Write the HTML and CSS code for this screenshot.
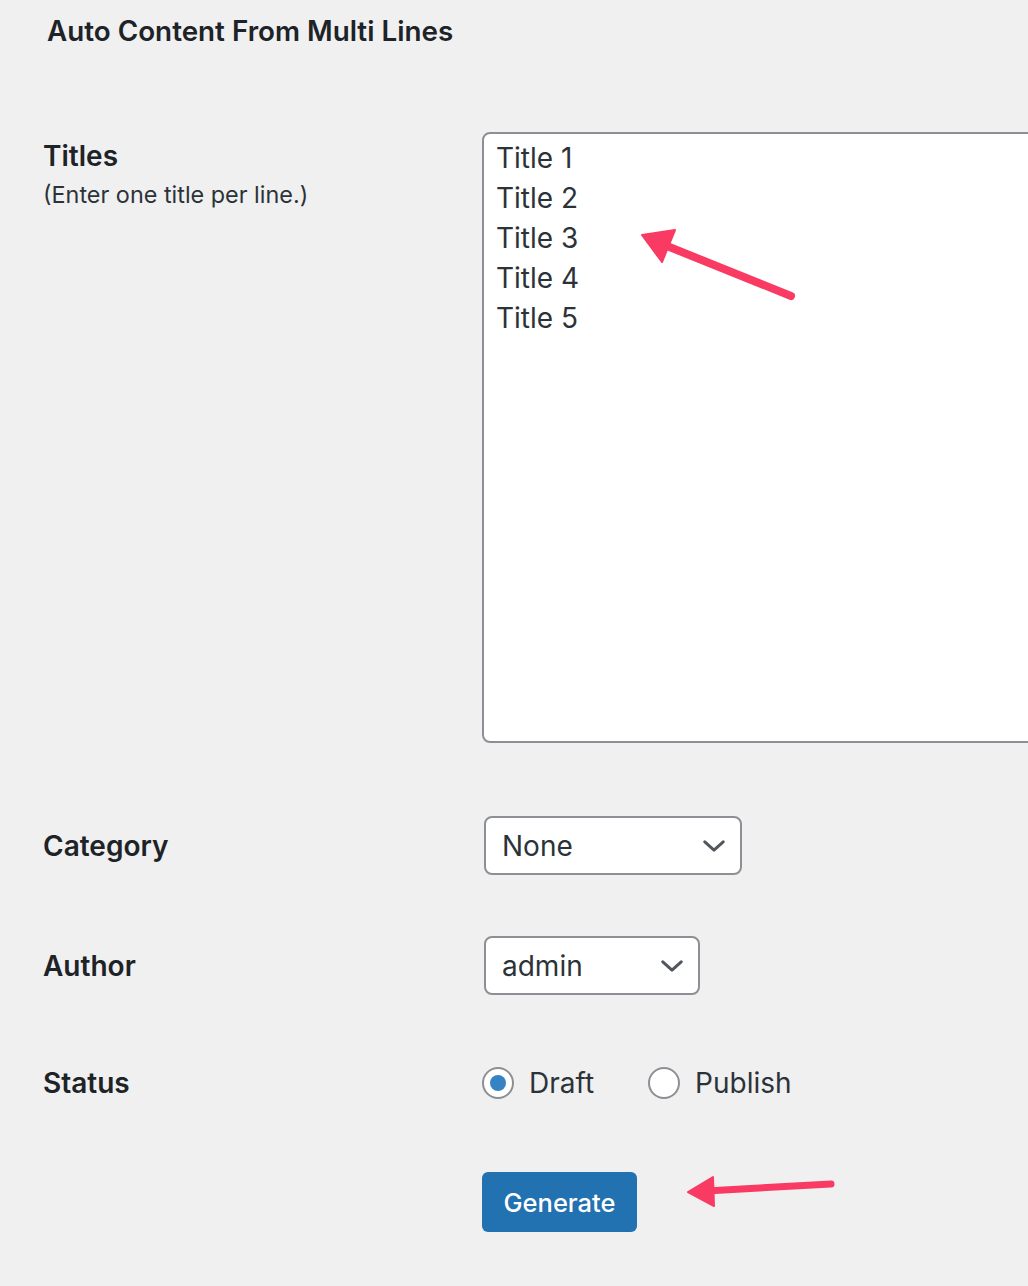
FILE: index.html
```html
<!DOCTYPE html>
<html lang="en">
<head>
<meta charset="utf-8">
<title>Auto Content From Multi Lines</title>
<link rel="stylesheet" href="styles.css">
</head>
<body>
<div class="page">
  <h2 class="title">Auto Content From Multi Lines</h2>
  <form class="form">
    <div class="row row-titles">
      <div class="label-col">
        <label class="label" for="titles">Titles</label>
        <p class="desc">(Enter one title per line.)</p>
      </div>
      <div class="clip">
        <textarea id="titles" class="textarea">Title 1
Title 2
Title 3
Title 4
Title 5</textarea>
      </div>
    </div>
    <div class="row row-category">
      <div class="label-col"><span class="label">Category</span></div>
      <div class="select select-category"><span>None</span>
        <svg class="chev" width="22" height="12" viewBox="0 0 22 12"><path d="M1.8 1.8 L11 10.2 L20.2 1.8" fill="none" stroke="#50575e" stroke-width="3" stroke-linecap="round" stroke-linejoin="round"/></svg>
      </div>
    </div>
    <div class="row row-author">
      <div class="label-col"><span class="label">Author</span></div>
      <div class="select select-author"><span>admin</span>
        <svg class="chev" width="22" height="12" viewBox="0 0 22 12"><path d="M1.8 1.8 L11 10.2 L20.2 1.8" fill="none" stroke="#50575e" stroke-width="3" stroke-linecap="round" stroke-linejoin="round"/></svg>
      </div>
    </div>
    <div class="row row-status">
      <div class="label-col"><span class="label">Status</span></div>
      <div class="radios">
        <label class="radio-opt"><input type="radio" name="status" class="radio" checked><span>Draft</span></label>
        <label class="radio-opt"><input type="radio" name="status" class="radio"><span>Publish</span></label>
      </div>
    </div>
    <div class="row row-submit">
      <div class="label-col"></div>
      <button type="button" class="btn">Generate</button>
    </div>
  </form>
</div>
<svg class="annot" width="1028" height="1286" viewBox="0 0 1028 1286">
  <line x1="791" y1="296" x2="662" y2="244" stroke="#f93b63" stroke-width="8" stroke-linecap="round"/>
  <polygon points="642,235 675,230 662,262" fill="#f93b63" stroke="#f93b63" stroke-width="2" stroke-linejoin="round"/>
  <line x1="831" y1="1184" x2="706" y2="1191" stroke="#f93b63" stroke-width="7" stroke-linecap="round"/>
  <polygon points="688,1192 713,1177 714,1206" fill="#f93b63" stroke="#f93b63" stroke-width="2" stroke-linejoin="round"/>
</svg>
</body>
</html>
```
FILE: styles.css
```css
html, body {
  margin: 0;
  padding: 0;
}
body {
  background: #f0f0f1;
  font-family: Inter, "Open Sans", "Liberation Sans", sans-serif;
  color: #1d2327;
  width: 1028px;
  height: 1286px;
  overflow: hidden;
  position: relative;
}
.page {
  padding: 13px 0 0 43px;
}
.title {
  margin: 0 0 0 4px;
  font-size: 27.8px;
  line-height: 36px;
  font-weight: 600;
  color: #1d2327;
}
.form {
  margin-top: 83px;
}
.row {
  display: flex;
}
.label-col {
  width: 439px;
  flex: none;
}
.label {
  display: block;
  font-size: 28px;
  line-height: 36px;
  font-weight: 600;
  color: #1d2327;
}
.row-titles {
  align-items: flex-start;
}
.row-titles .label {
  margin-top: 6px;
}
.desc {
  margin: 6px 0 0;
  font-size: 23.4px;
  line-height: 30px;
  color: #2c3338;
}
.clip {
  flex: 1;
  min-width: 0;
  overflow: hidden;
}
.textarea {
  display: block;
  box-sizing: border-box;
  width: 600px;
  height: 611px;
  margin: 0;
  padding: 4px 12px;
  border: 2px solid #8c8f94;
  border-radius: 8px;
  background: #fff;
  font-family: inherit;
  font-size: 28px;
  line-height: 40px;
  color: #2c3338;
  resize: none;
  outline: none;
}
.row-category {
  margin-top: 73px;
  align-items: center;
}
.row-author {
  margin-top: 61px;
  align-items: center;
}
.row-status {
  margin-top: 70px;
  align-items: center;
}
.row-submit {
  margin-top: 71px;
}
.select {
  box-sizing: border-box;
  height: 59px;
  margin-left: 2px;
  display: flex;
  align-items: center;
  justify-content: space-between;
  padding: 0 15px 0 16px;
  border: 2px solid #8c8f94;
  border-radius: 8px;
  background: #fff;
  font-size: 28px;
  color: #2c3338;
}
.select-category {
  width: 258px;
}
.select-author {
  width: 216px;
}
.chev {
  display: block;
  flex: none;
}
.radios {
  display: flex;
  align-items: center;
  gap: 54px;
}
.radio-opt {
  display: flex;
  align-items: center;
  gap: 15px;
  font-size: 28px;
  line-height: 36px;
  color: #2c3338;
}
.radio {
  appearance: none;
  -webkit-appearance: none;
  box-sizing: border-box;
  width: 32px;
  height: 32px;
  margin: 0;
  border: 2px solid #8c8f94;
  border-radius: 50%;
  background: #fff;
  display: flex;
  align-items: center;
  justify-content: center;
}
.radio:checked::before {
  content: "";
  width: 16px;
  height: 16px;
  border-radius: 50%;
  background: #3582c4;
}
.btn {
  box-sizing: border-box;
  width: 155px;
  height: 60px;
  margin: 0;
  padding: 0;
  border: none;
  border-radius: 6px;
  background: #2271b1;
  color: #fff;
  font-family: inherit;
  font-size: 25.5px;
  font-weight: 500;
}
.annot {
  position: absolute;
  top: 0;
  left: 0;
  pointer-events: none;
}
```
